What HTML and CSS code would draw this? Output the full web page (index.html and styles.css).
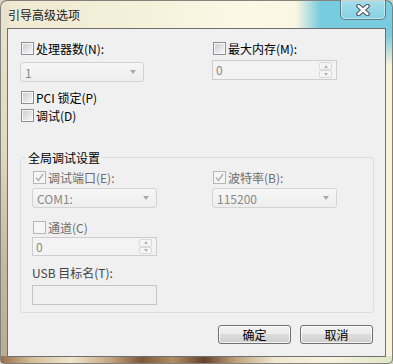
FILE: index.html
```html
<!DOCTYPE html>
<html lang="zh-CN">
<head>
<meta charset="UTF-8">
<title>引导高级选项</title>
<link rel="stylesheet" href="styles.css">
</head>
<body>
<div class="window">
  <div class="titlebar">
    <span class="title">引导高级选项</span>
    <div class="close">
      <svg width="14" height="12" viewBox="0 0 14 12">
        <path d="M2.5 2 L11.5 10 M11.5 2 L2.5 10" stroke="#4a5660" stroke-width="4.6" stroke-linecap="round"/>
        <path d="M2.5 2 L11.5 10 M11.5 2 L2.5 10" stroke="#ffffff" stroke-width="2.4" stroke-linecap="round"/>
      </svg>
    </div>
  </div>

  <div class="client">
    <!-- 处理器 / 内存 -->
    <div class="cols">
      <div class="col left">
        <label class="check"><span class="box"></span>处理器数(N):</label>
        <div class="combo"><span>1</span><span class="arrow"></span></div>
      </div>
      <div class="col">
        <label class="check"><span class="box"></span>最大内存(M):</label>
        <div class="spin spin-top">
          <span class="val">0</span>
          <span class="spin-btns"><span class="up"></span><span class="down"></span></span>
        </div>
      </div>
    </div>

    <label class="check pci"><span class="box"></span>PCI 锁定(P)</label>
    <label class="check debug"><span class="box"></span>调试(D)</label>

    <fieldset class="group">
      <legend>全局调试设置</legend>
      <div class="cols">
        <div class="col left-inner">
          <label class="check disabled">
            <span class="box checked">
              <svg width="9" height="9" viewBox="0 0 9 9"><path d="M1 4.5 L3.5 7.5 L8 1" stroke="#b4b4b4" stroke-width="1.6" fill="none"/></svg>
            </span>调试端口(E):
          </label>
          <div class="combo mid"><span>COM1:</span><span class="arrow"></span></div>

          <label class="check disabled channel"><span class="box"></span>通道(C)</label>
          <div class="spin spin-channel">
            <span class="val">0</span>
            <span class="spin-btns"><span class="up"></span><span class="down"></span></span>
          </div>

          <div class="field-label">USB 目标名(T):</div>
          <div class="textbox"></div>
        </div>
        <div class="col">
          <label class="check disabled">
            <span class="box checked">
              <svg width="9" height="9" viewBox="0 0 9 9"><path d="M1 4.5 L3.5 7.5 L8 1" stroke="#b4b4b4" stroke-width="1.6" fill="none"/></svg>
            </span>波特率(B):
          </label>
          <div class="combo mid"><span>115200</span><span class="arrow"></span></div>
        </div>
      </div>
    </fieldset>

    <div class="buttons">
      <button type="button">确定</button>
      <button type="button">取消</button>
    </div>
  </div>
</div>
</body>
</html>
```

FILE: styles.css
```css
html, body {
  margin: 0;
  padding: 0;
  background: #d9d2c2;
}

body {
  font-family: "Noto Sans CJK SC", "Liberation Sans", sans-serif;
  font-size: 12px;
  color: #000;
}

/* 窗口外框 (Aero 玻璃) */
.window {
  box-sizing: border-box;
  width: 393px;
  height: 364px;
  border: 1px solid rgba(70, 70, 70, 0.65);
  border-radius: 7px 7px 5px 5px;
  padding: 0 6px 6px 6px;
  display: flex;
  flex-direction: column;
  background:
    linear-gradient(to right, #9c6f4c 0%, #d4bf9c 8%, #efe5cd 18%, #c3a582 28%, #7e583d 36%, #b08d65 44%, #654430 52%, #bea17c 60%, #efe7d1 70%, #f7f2df 84%, #dfe6c8 100%) left bottom / 100% 7px no-repeat,
    linear-gradient(to right, rgba(120, 204, 222, 0) 0, #78cce0 24px) right top / 96px 28px no-repeat,
    linear-gradient(to bottom, #78cce0 0, #78cce0 34px, rgba(120, 204, 222, 0) 64px) right top / 9px 100% no-repeat,
    linear-gradient(to bottom, #e9e3cf 0, #e0d9c3 40%, #c5baa6 70%, #b8ab95 100%) left top / 8px 100% no-repeat,
    linear-gradient(to right, #efe9d2 0%, #f5f0d9 35%, #fbf8e6 62%, #f6f2dc 100%);
}

.titlebar {
  height: 27px;
  display: flex;
  justify-content: space-between;
  align-items: flex-start;
}

.title {
  padding: 6px 0 0 1px;
  line-height: 16px;
  font-size: 12px;
  color: #1a1a1a;
}

.close {
  box-sizing: border-box;
  width: 46px;
  height: 20px;
  margin-top: -1px;
  border: 1px solid rgba(45, 60, 70, 0.6);
  border-top: none;
  border-radius: 0 0 5px 5px;
  background: linear-gradient(rgba(255, 255, 255, 0.35), rgba(255, 255, 255, 0.1));
  box-shadow: inset 0 0 0 1px rgba(255, 255, 255, 0.45);
  display: flex;
  justify-content: center;
  align-items: center;
  padding-top: 1px;
}

/* 客户区 */
.client {
  flex: 1;
  background: #f0f0f0;
  border: 1px solid #6f6f6f;
  padding: 12px 11px 0 12px;
  display: flex;
  flex-direction: column;
  align-items: flex-start;
}

.cols {
  display: flex;
}

.col {
  display: flex;
  flex-direction: column;
  align-items: flex-start;
}

.col.left {
  width: 192px;
}

.col.left-inner {
  width: 180px;
}

/* 复选框 */
.check {
  display: flex;
  align-items: center;
  height: 15px;
  line-height: 15px;
  white-space: nowrap;
}

.check.disabled {
  color: #6d6d6d;
}

.box {
  box-sizing: border-box;
  width: 13px;
  height: 13px;
  margin: 0 2px 0 1px;
  border: 1px solid #8e8f8f;
  padding: 1px;
  background: linear-gradient(135deg, #cbcfd4, #f6f6f6) content-box, #f8f8f8;
  display: flex;
  align-items: center;
  justify-content: center;
}

.check.disabled .box {
  border-color: #b7b7b7;
  background: #f6f6f6;
}

.box.checked {
  padding: 0;
}

.pci {
  margin-top: 8px;
}

.debug {
  margin-top: 3px;
}

/* 下拉框 */
.combo {
  box-sizing: border-box;
  width: 124px;
  height: 20px;
  margin-top: 6px;
  padding: 0 7px 0 4px;
  border: 1px solid #d3d3d3;
  border-radius: 3px;
  background: linear-gradient(#f7f7f7, #ededed);
  color: #8a8a8a;
  display: flex;
  justify-content: space-between;
  align-items: center;
}

.combo.mid {
  width: 125px;
  margin-top: 3px;
}

.arrow {
  width: 0;
  height: 0;
  border-top: 4px solid #a9a9a9;
  border-left: 3px solid transparent;
  border-right: 3px solid transparent;
}

/* 数字框 */
.spin {
  box-sizing: border-box;
  width: 125px;
  height: 20px;
  border: 1px solid #cdcdcd;
  background: #f3f3f3;
  color: #8a8a8a;
  display: flex;
  justify-content: space-between;
  align-items: stretch;
  padding: 1px 4px 1px 0;
}

.spin .val {
  padding-left: 3px;
  line-height: 16px;
}

.spin-top {
  margin-top: 4px;
}

.spin-channel {
  margin-top: 2px;
  height: 19px;
}

.spin-btns {
  width: 13px;
  display: flex;
  flex-direction: column;
}

.spin-btns span {
  flex: 1;
  border: 1px solid #dadada;
  border-radius: 2px;
  background: #f5f5f5;
  display: flex;
  align-items: center;
  justify-content: center;
}

.spin-btns .up::after {
  content: "";
  border-bottom: 3px solid #b2b2b2;
  border-left: 2px solid transparent;
  border-right: 2px solid transparent;
}

.spin-btns .down::after {
  content: "";
  border-top: 3px solid #b2b2b2;
  border-left: 2px solid transparent;
  border-right: 2px solid transparent;
}

/* 分组框 */
.group {
  box-sizing: border-box;
  width: 354px;
  margin: 27px 0 0 0;
  padding: 5px 11px 7px 11px;
  border: 1px solid #d5dfe5;
  border-radius: 3px;
  min-inline-size: 0;
}

.group legend {
  padding: 0 2px;
  margin-left: -6px;
  line-height: 15px;
  color: #000;
}

.channel {
  margin-top: 12px;
}

.field-label {
  margin-top: 9px;
  line-height: 15px;
  color: #444;
}

.textbox {
  box-sizing: border-box;
  width: 125px;
  height: 20px;
  margin-top: 5px;
  border: 1px solid #c4c4c4;
  background: #f0f0f0;
}

/* 底部按钮 */
.buttons {
  align-self: stretch;
  display: flex;
  justify-content: flex-end;
  gap: 9px;
  margin: 12px 1px 0 0;
}

.buttons button {
  box-sizing: border-box;
  width: 73px;
  height: 19px;
  padding: 0;
  border: 1px solid #707070;
  border-radius: 3px;
  background: linear-gradient(#f2f2f2 0%, #ebebeb 50%, #dddddd 50%, #cfcfcf 100%);
  box-shadow: inset 0 0 0 1px rgba(255, 255, 255, 0.7);
  font-family: "Noto Sans CJK SC", "Liberation Sans", sans-serif;
  font-size: 12px;
  line-height: 15px;
  color: #000;
}
```
